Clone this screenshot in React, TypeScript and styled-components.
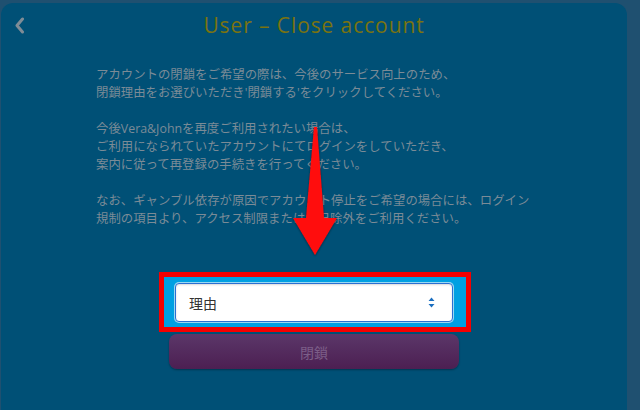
import React from 'react';
import styled, { createGlobalStyle } from 'styled-components';

const paragraphs = [
	['アカウントの閉鎖をご希望の際は、今後のサービス向上のため、', "閉鎖理由をお選びいただき'閉鎖する'をクリックしてください。"],
	['今後Vera&Johnを再度ご利用されたい場合は、', 'ご利用になられていたアカウントにてログインをしていただき、', '案内に従って再登録の手続きを行ってください。'],
	['なお、ギャンブル依存が原因でアカウント停止をご希望の場合には、ログイン', '規制の項目より、アクセス制限または自己除外をご利用ください。'],
];

const App = () => {
	return (
		<>
			<GlobalStyle />
			<Page>
				<Panel>
					<Header>
						<BackButton aria-label='back'>
							<svg width='11' height='17' viewBox='0 0 11 17'>
								<path d='M8.5 2 L3 8.5 L8.5 15' fill='none' stroke='#7f8c96' strokeWidth='3' strokeLinecap='round' strokeLinejoin='round' />
							</svg>
						</BackButton>
						<Title>User – Close account</Title>
					</Header>
					<Body>
						{paragraphs.map((lines, i) => (
							<Paragraph key={i}>
								{lines.map((line, j) => (
									<React.Fragment key={j}>
										{line}
										{j < lines.length - 1 && <br />}
									</React.Fragment>
								))}
							</Paragraph>
						))}
					</Body>
					<Highlight>
						<SelectBox>
							<span>理由</span>
							<svg width='7' height='11' viewBox='0 0 7 11'>
								<path d='M3.5 0.5 L6.5 4 L0.5 4 Z M3.5 10.5 L6.5 7 L0.5 7 Z' fill='#1b6fc0' />
							</svg>
						</SelectBox>
					</Highlight>
					<CloseButton>閉鎖</CloseButton>
					<Arrow width='54' height='140' viewBox='0 0 54 140'>
						<defs>
							<filter id='shadow' x='-20%' y='-10%' width='140%' height='120%'>
								<feDropShadow dx='0' dy='1' stdDeviation='1.2' floodColor='#000' floodOpacity='0.45' />
							</filter>
						</defs>
						<polygon points='25,2 28,2 35,93 48,93 26,130 4,93 17,93' fill='#ff0a0a' filter='url(#shadow)' />
					</Arrow>
				</Panel>
			</Page>
		</>
	);
};

export default App;

const GlobalStyle = createGlobalStyle({
	'html, body': {
		margin: 0,
		padding: 0,
		background: '#1f5070',
		fontFamily: '"Open Sans", "Noto Sans CJK JP", sans-serif',
	},
});

const Page = styled.div({
	width: '640px',
	height: '410px',
	overflow: 'hidden',
	display: 'flex',
	paddingTop: '3px',
	boxSizing: 'border-box',
});

const Panel = styled.div({
	position: 'relative',
	marginLeft: '1px',
	width: '626px',
	height: '407px',
	background: '#005076',
	borderRadius: '12px 12px 0 0',
	display: 'flex',
	flexDirection: 'column',
	alignItems: 'center',
});

const Header = styled.div({
	position: 'relative',
	width: '100%',
	height: '44px',
	display: 'flex',
	alignItems: 'center',
	justifyContent: 'center',
});

const BackButton = styled.div({
	position: 'absolute',
	left: '13px',
	top: '14px',
	display: 'flex',
});

const Title = styled.h1({
	margin: 0,
	fontFamily: '"Open Sans", sans-serif',
	fontWeight: 400,
	fontSize: '21px',
	letterSpacing: '0.9px',
	color: '#7a7310',
});

const Body = styled.div({
	width: '436px',
	marginTop: '19px',
	display: 'flex',
	flexDirection: 'column',
	gap: '18px',
});

const Paragraph = styled.p({
	margin: 0,
	fontFamily: '"Open Sans", "Noto Sans CJK JP", sans-serif',
	fontSize: '12.4px',
	lineHeight: '18px',
	color: '#7b8b96',
	whiteSpace: 'nowrap',
});

const Highlight = styled.div({
	marginTop: '44px',
	width: '312px',
	boxSizing: 'border-box',
	border: '5px solid #f50000',
	background: '#00a0e2',
	padding: '6px 13px 5px 11px',
	transform: 'translateX(1px)',
});

const SelectBox = styled.div({
	height: '39px',
	boxSizing: 'border-box',
	background: '#fff',
	border: '1.5px solid #2a6fd2',
	borderRadius: '4px',
	boxShadow: '0 0 0 1px rgba(255,255,255,0.6), inset 0 1px 2px rgba(0,0,0,0.15)',
	display: 'flex',
	alignItems: 'center',
	justifyContent: 'space-between',
	padding: '0 17px 0 13px',
	fontFamily: '"Noto Sans CJK JP", sans-serif',
	fontSize: '14px',
	color: '#333',
});

const CloseButton = styled.div({
	marginTop: '2px',
	width: '290px',
	height: '35px',
	borderRadius: '8px',
	background: 'linear-gradient(#5b3769, #4c1f52)',
	boxShadow: '0 1px 2px rgba(0,0,0,0.35)',
	display: 'flex',
	alignItems: 'center',
	justifyContent: 'center',
	fontFamily: '"Noto Sans CJK JP", sans-serif',
	fontSize: '14px',
	color: '#7c5e88',
});

const Arrow = styled.svg({
	position: 'absolute',
	left: '288px',
	top: '122px',
});
